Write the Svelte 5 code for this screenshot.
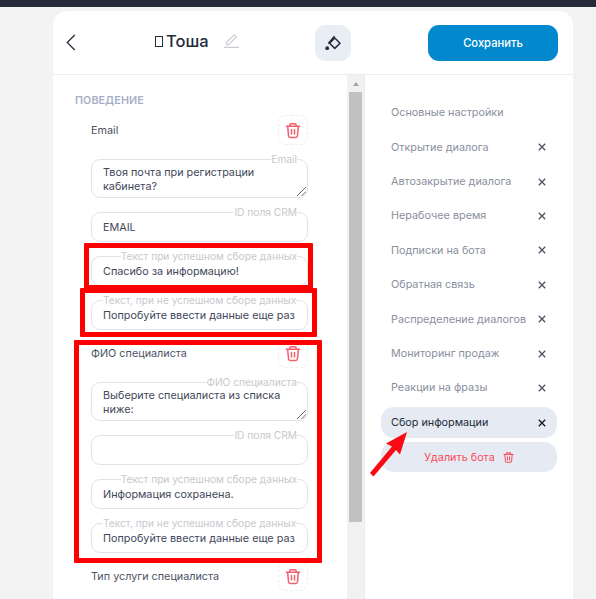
<script>
  const navItems = [
    'Открытие диалога',
    'Автозакрытие диалога',
    'Нерабочее время',
    'Подписки на бота',
    'Обратная связь',
    'Распределение диалогов',
    'Мониторинг продаж',
    'Реакции на фразы'
  ];

  const okLabel = 'Текст при успешном сборе данных';
  const failLabel = 'Текст, при не успешном сборе данных';
  const failText = 'Попробуйте ввести данные еще раз';

  const groups = [
    {
      name: 'Email',
      area: 'Твоя почта при регистрации кабинета?',
      crm: 'EMAIL',
      ok: 'Спасибо за информацию!'
    },
    {
      name: 'ФИО специалиста',
      area: 'Выберите специалиста из списка ниже:',
      crm: '',
      ok: 'Информация сохранена.'
    }
  ];
</script>

{#snippet trash(cls)}
  <svg class={cls} viewBox="0 0 18 18" fill="none" stroke="currentColor" stroke-width="1.7" stroke-linecap="round" stroke-linejoin="round">
    <path d="M1.5 4.2h15" />
    <path d="M5.5 4V2.6q0-1.2 1.2-1.2h4.6q1.2 0 1.2 1.2V4" />
    <path d="M3 4.4l1 10.8q.2 1.6 1.8 1.6h6.4q1.6 0 1.8-1.6l1-10.8" />
    <path d="M7.3 8v5M10.7 8v5" />
  </svg>
{/snippet}

{#snippet cross()}
  <svg class="cross" viewBox="0 0 8 8" fill="none" stroke="currentColor" stroke-width="1.3">
    <path d="M.8.8l6.4 6.4M7.2.8L.8 7.2" />
  </svg>
{/snippet}

{#snippet head(name)}
  <div class="field-head">
    <span>{name}</span>
    <button class="del" aria-label="Удалить">{@render trash('trash')}</button>
  </div>
{/snippet}

{#snippet field(label, value)}
  <fieldset class="field">
    <legend>{label}</legend>
    <div class="value">{value}</div>
  </fieldset>
{/snippet}

<div class="topbar"></div>
<div class="page">
  <div class="card">
    <header>
      <button class="back" aria-label="Назад">
        <svg viewBox="0 0 10 18" fill="none" stroke="#222b3a" stroke-width="1.3"><path d="M9 1L1 9l8 8" /></svg>
      </button>
      <div class="title">
        <i class="tofu"></i>
        <span>Тоша</span>
        <svg class="pencil" viewBox="0 0 16 16" fill="none" stroke="#c9ccd1" stroke-width="1.1">
          <path d="M3 10.5L10.6 2.8l2.2 2.2L5.2 12.6H3z" />
          <path d="M0.5 15.4h15" stroke-width="1.3" />
        </svg>
      </div>
      <button class="paint" aria-label="Оформление">
        <svg viewBox="0 0 16 16" fill="none" stroke="#222b3a" stroke-width="1.5" stroke-linejoin="round">
          <path d="M9.8 3L15 8.2 9.8 13.4 4.6 8.2z" />
          <path d="M3.4 8.6L9.6 1.2" stroke-width="1.7" />
          <circle cx="2.2" cy="13.2" r="1.9" fill="#222b3a" stroke="none" />
        </svg>
      </button>
      <button class="save">Сохранить</button>
    </header>

    <div class="body">
      <div class="left">
        <div class="content">
          <h4>ПОВЕДЕНИЕ</h4>
          {#each groups as g}
            {@render head(g.name)}
            <fieldset class="field area">
              <legend>{g.name}</legend>
              <div class="value">{g.area}</div>
              <svg class="grip" viewBox="0 0 9 9" stroke="#555" stroke-width="0.9"><path d="M0 9L9 0M4.5 9L9 4.5" /></svg>
            </fieldset>
            {@render field('ID поля CRM', g.crm)}
            {@render field(okLabel, g.ok)}
            {@render field(failLabel, failText)}
          {/each}
          {@render head('Тип услуги специалиста')}
        </div>
        <div class="scrollbar">
          <i class="arrow"></i>
          <b class="thumb"></b>
        </div>
      </div>

      <nav>
        <div class="item first">Основные настройки</div>
        {#each navItems as item}
          <div class="item"><span>{item}</span>{@render cross()}</div>
        {/each}
        <div class="item active"><span>Сбор информации</span>{@render cross()}</div>
        <button class="remove">Удалить бота {@render trash('trash small')}</button>
      </nav>
    </div>
  </div>

  <!-- red annotations drawn over the screenshot -->
  <div class="mark m1"></div>
  <div class="mark m2"></div>
  <div class="mark m3"></div>
  <svg class="pointer" viewBox="0 0 38 47" fill="#fa0a14">
    <path d="M37 2L16 13.5l6 3L0 43l3.5 3.5L26 20l4 4.5z" />
  </svg>
</div>

<style>
  :global(body) {
    margin: 0;
    background: #f3f3f4;
    font-family: Inter, "Noto Sans", sans-serif;
    overflow: hidden;
  }

  .topbar {
    height: 7px;
    background: #242a38;
  }

  .page {
    position: relative;
    height: 592px;
    padding: 4px 23px 0 53px;
    box-sizing: border-box;
    overflow: hidden;
  }

  .card {
    background: #fff;
    border-radius: 14px 14px 0 0;
    height: 600px;
  }

  button {
    border: 0;
    padding: 0;
    font-family: inherit;
    cursor: pointer;
  }

  header {
    display: flex;
    align-items: center;
    height: 63px;
    border-bottom: 1px solid #ececee;
    box-sizing: content-box;
  }

  .back {
    background: none;
    width: 11px;
    height: 17px;
    margin-left: 13px;
  }

  .back svg {
    display: block;
    width: 10px;
    height: 17px;
  }

  .title {
    display: flex;
    align-items: center;
    margin-left: 78px;
    margin-top: -3px;
    font-size: 16.5px;
    font-weight: 500;
    color: #222b3a;
    width: 160px;
  }

  .tofu {
    width: 8px;
    height: 11px;
    margin: 1px 3px 0 0;
    border: 1px solid #222b3a;
    box-sizing: border-box;
  }

  .pencil {
    width: 17px;
    height: 16px;
    margin: -3px 0 0 14px;
  }

  .paint {
    width: 36px;
    height: 36px;
    border-radius: 11px;
    background: #e9edf4;
    display: flex;
    align-items: center;
    justify-content: center;
    margin-top: 1px;
  }

  .paint svg {
    width: 16px;
    height: 16px;
  }

  .save {
    width: 130px;
    height: 36px;
    margin-left: 77px;
    margin-top: 1px;
    border-radius: 11px;
    background: #0288cd;
    color: #fff;
    font-size: 11.2px;
    font-weight: 500;
  }

  .body {
    display: flex;
    height: 525px;
  }

  .left {
    width: 311px;
    display: flex;
    border-right: 1px solid #ececee;
  }

  .content {
    width: 294px;
    flex-shrink: 0;
    padding: 20px 0 0 22px;
    box-sizing: border-box;
    overflow: hidden;
  }

  h4 {
    margin: 0;
    font-size: 10.7px;
    line-height: 12px;
    font-weight: 600;
    color: #a7afc7;
    letter-spacing: 0.1px;
  }

  .field-head {
    display: flex;
    align-items: center;
    justify-content: space-between;
    height: 30px;
    margin: 8px 39px 0 16px;
    font-size: 10.8px;
    color: #4b5363;
  }

  .del {
    width: 30px;
    height: 30px;
    background: none;
    border: 1px dashed #eceef2;
    border-radius: 8px;
    color: #f0616d;
    display: flex;
    align-items: center;
    justify-content: center;
  }

  .trash {
    width: 16px;
    height: 17px;
  }

  .field {
    position: relative;
    margin: 8px 39px 0 16px;
    padding: 0 11px;
    height: 36px;
    min-width: 0;
    box-sizing: border-box;
    border: 1px solid #e2e3e7;
    border-radius: 9px;
  }

  .field legend {
    margin-left: auto;
    margin-right: -1px;
    padding: 0;
    font-size: 10.2px;
    line-height: 12px;
    color: #c8c8cc;
    white-space: nowrap;
  }

  .value {
    font-size: 10.8px;
    line-height: 14px;
    color: #3f4759;
    margin-top: 3px;
    white-space: nowrap;
    min-height: 14px;
  }

  .area {
    height: 45px;
    margin-top: 8px;
  }

  .area .value {
    white-space: normal;
    margin-top: 1px;
    width: 190px;
  }

  .grip {
    position: absolute;
    right: 1px;
    bottom: 1px;
    width: 9px;
    height: 9px;
  }

  .scrollbar {
    width: 17px;
    background: #f1f1f1;
    display: flex;
    flex-direction: column;
    align-items: center;
  }

  .arrow {
    margin-top: 7px;
    border: 3.5px solid transparent;
    border-top: 0;
    border-bottom: 4px solid #a3a3a3;
  }

  .thumb {
    width: 13px;
    height: 430px;
    margin-top: 6px;
    background: #c1c1c1;
  }

  nav {
    flex: 1;
    padding: 22.3px 16px 0 16px;
    font-size: 10.8px;
    color: #8a8f9e;
  }

  .item {
    display: flex;
    align-items: center;
    justify-content: space-between;
    height: 31px;
    margin-bottom: 3.4px;
    padding: 0 11px 0 10px;
    box-sizing: border-box;
  }

  .cross {
    width: 8px;
    height: 8px;
    color: #4b5363;
  }

  .active {
    margin: 4px 0 4px;
    background: #e6ebf3;
    border-radius: 13px;
    color: #222b3a;
  }

  .active .cross {
    color: #111722;
  }

  .remove {
    display: flex;
    align-items: center;
    justify-content: center;
    gap: 8px;
    width: 100%;
    height: 30px;
    background: #e6ebf3;
    border-radius: 13px;
    color: #fa4a58;
    font-size: 10.8px;
  }

  .small {
    width: 11px;
    height: 13px;
  }

  .mark {
    position: absolute;
    border: 5px solid #fe0000;
    box-sizing: border-box;
    border-radius: 1px;
  }

  .m1 { left: 84px; top: 236px; width: 229px; height: 47px; }
  .m2 { left: 80px; top: 281px; width: 237px; height: 49px; }
  .m3 { left: 74px; top: 333px; width: 248px; height: 223px; }

  .pointer {
    position: absolute;
    left: 370px;
    top: 423px;
    width: 38px;
    height: 47px;
  }
</style>
